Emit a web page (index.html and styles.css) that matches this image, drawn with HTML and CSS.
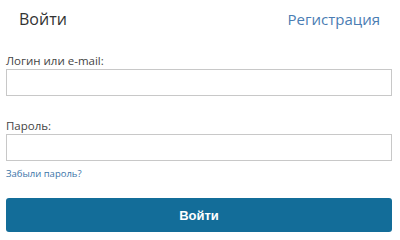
FILE: index.html
```html
<!DOCTYPE html>
<html lang="ru">

<head>
    <meta charset="UTF-8">
    <meta name="viewport" content="width=device-width, initial-scale=1.0">
    <title>Вход</title>
    <link rel="stylesheet" href="styles.css">
</head>

<body>

    <!-- Tabs: login / registration -->
    <div class="tabs">
        <span class="tab active">Войти</span>
        <a href="#" class="tab">Регистрация</a>
    </div>

    <form class="login-form">
        <div class="field">
            <label for="login">Логин или e-mail:</label>
            <input type="text" id="login">
        </div>

        <div class="field">
            <label for="password">Пароль:</label>
            <input type="password" id="password">
        </div>

        <a href="#" class="forgot-link">Забыли пароль?</a>

        <button type="submit" class="submit-button">Войти</button>
    </form>

</body>

</html>
```

FILE: styles.css
```css
* {
    margin: 0;
    padding: 0;
    box-sizing: border-box;
}

body {
    font-family: "Open Sans", "Noto Sans", Arial, sans-serif;
    background-color: #fff;
    padding: 0 8px 0 6px;
    width: 400px;
}

/* Tabs row */
.tabs {
    display: flex;
    justify-content: space-between;
    align-items: center;
    height: 37px;
    margin-bottom: 15px;
    padding: 0 12px 0 13px;
}

.tab {
    font-size: 16px;
    color: #333;
    text-decoration: none;
}

a.tab {
    font-size: 15px;
    color: #4a7db3;
}

.login-form {
    display: flex;
    flex-direction: column;
}

.field {
    display: flex;
    flex-direction: column;
}

.field + .field {
    margin-top: 21px;
}

.field label {
    font-size: 11.5px;
    color: #444;
    line-height: 17px;
}

.field input {
    height: 27px;
    border: 1px solid #c8c8c8;
    background-color: #fff;
    font-size: 13px;
    padding: 0 6px;
}

.forgot-link {
    font-size: 9.5px;
    color: #3a74a8;
    text-decoration: none;
    margin-top: 6px;
    line-height: 14px;
}

.submit-button {
    margin-top: 17px;
    height: 34px;
    background-color: #136d99;
    color: #fff;
    border: none;
    border-radius: 3px;
    font-family: "Liberation Sans", Arial, sans-serif;
    font-weight: bold;
    font-size: 13px;
    cursor: pointer;
}
```
